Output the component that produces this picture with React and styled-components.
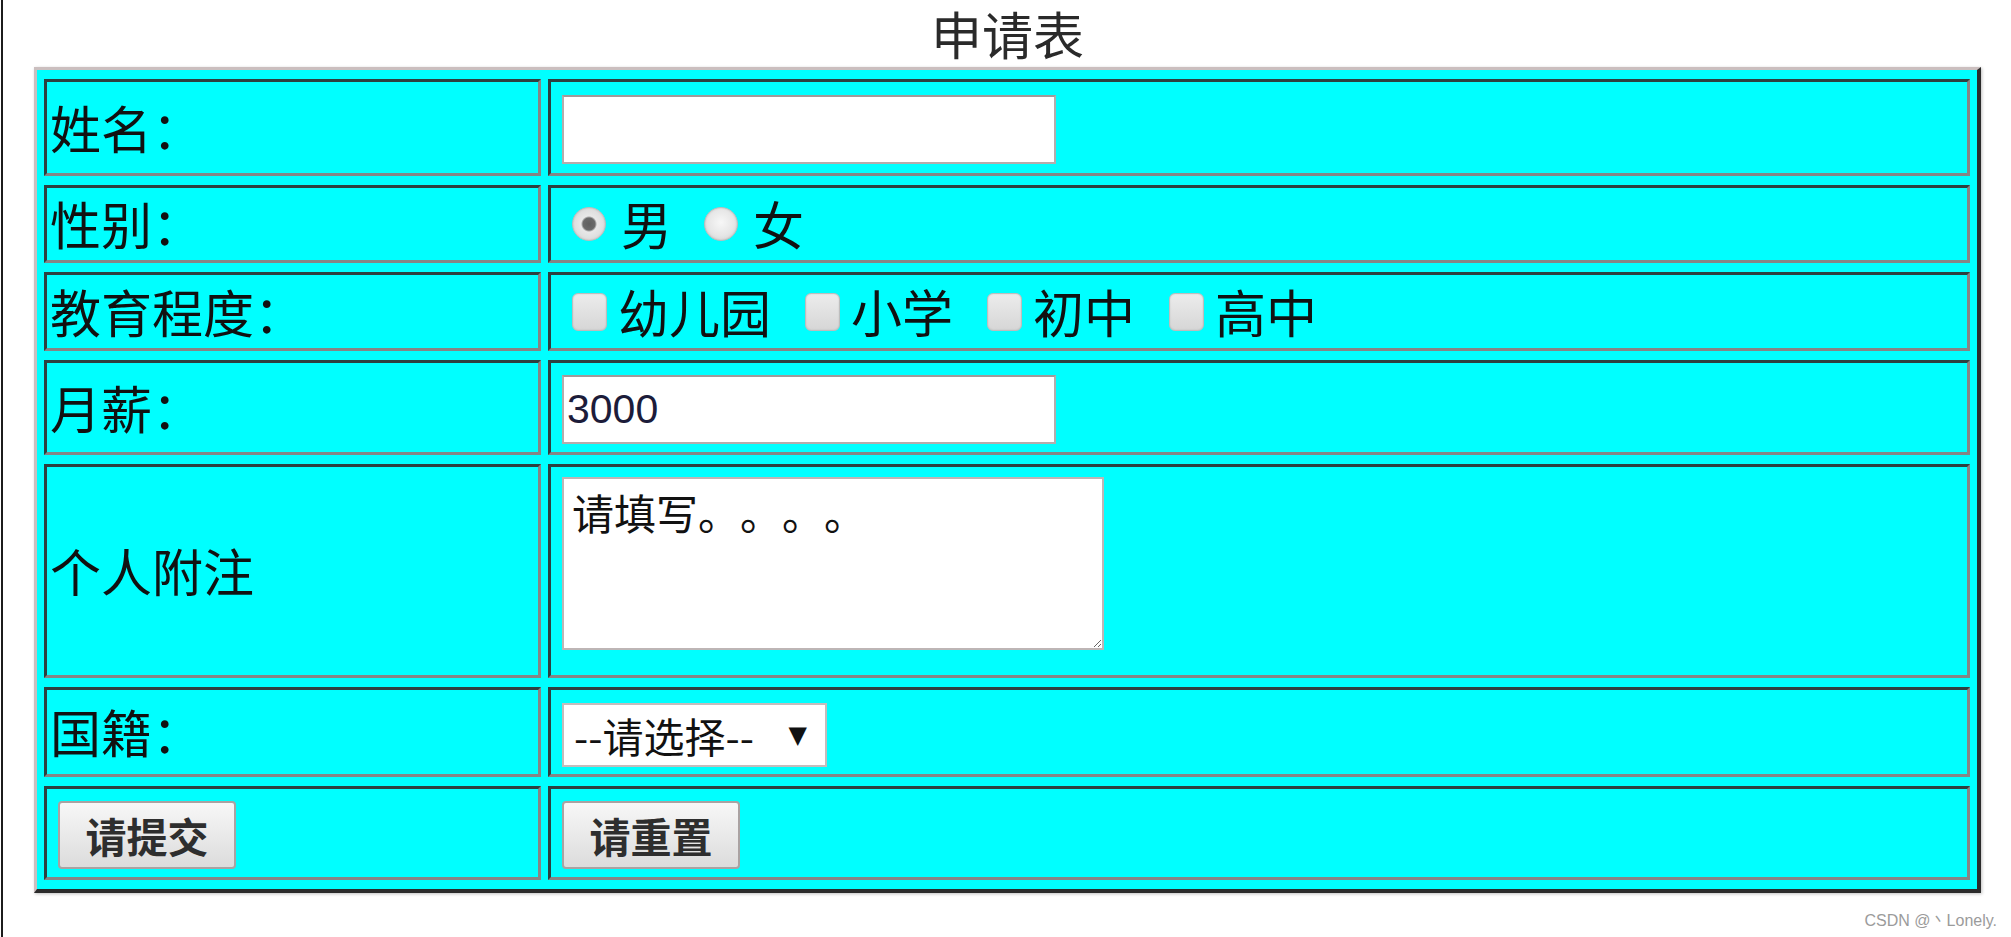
import React from 'react';
import styled, { createGlobalStyle } from 'styled-components';

const GlobalStyle = createGlobalStyle`
  html, body {
    margin: 0;
    padding: 0;
    background: #fff;
  }
  body {
    font-family: "Noto Sans CJK SC", "Liberation Sans", sans-serif;
    color: #111;
    text-spacing-trim: space-all;
  }
`;

const Page = styled.div`
  min-height: 937px;
  box-sizing: border-box;
  margin-left: 1px;
  border-left: 2px solid #1c1c1c;
  padding-left: 31px;
`;

const FormTable = styled.table`
  width: 1947px;
  box-sizing: border-box;
  border-collapse: separate;
  border-spacing: 7px 9px;
  background: #00ffff;
  border-style: solid;
  border-width: 3px 4px 4px 3px;
  border-color: #cbbfbf #2b2b2b #2b2b2b #cbbfbf;
  box-shadow: 1px 1px 3px rgba(0, 0, 0, 0.25);
`;

const Caption = styled.caption`
  line-height: 67px;
  font-size: 51px;
  color: #2a2a2a;
`;

const Row = styled.tr`
  height: ${(p) => p.$h}px;
`;

const Cell = styled.td`
  box-sizing: border-box;
  width: ${(p) => p.$w || 'auto'};
  padding: 3px;
  border-style: solid;
  border-width: 3px;
  border-color: #2d4040 #858585 #858585 #2d4040;
  font-size: 51px;
  line-height: 1.2;
  vertical-align: middle;
  white-space: nowrap;
`;

const TextInput = styled.input`
  box-sizing: border-box;
  width: 494px;
  height: 69px;
  margin: 0 0 0 8px;
  padding: 0 3px;
  border: 2px solid #b4acac;
  border-top-color: #a09a9a;
  background: #fff;
  font: 41px "Liberation Sans", Arial, sans-serif;
  color: #1c1c3a;
  vertical-align: middle;
  outline: none;
`;

const OptionGroup = styled.div`
  display: flex;
  align-items: center;
  gap: ${(p) => p.$gap}px;
  padding-left: 18px;
`;

const Option = styled.label`
  display: inline-flex;
  align-items: center;
  gap: ${(p) => p.$gap}px;
  font-size: 51px;
  cursor: pointer;
`;

const Radio = styled.input.attrs({ type: 'radio' })`
  appearance: none;
  margin: 0;
  width: 34px;
  height: 34px;
  border-radius: 50%;
  border: 1px solid #bdbdbd;
  background: radial-gradient(circle at 50% 45%, #f7f7f7 0%, #e6e6e6 55%, #cdcdcd 100%);
  box-shadow: inset 0 0 2px rgba(0, 0, 0, 0.15);

  &:checked {
    background: radial-gradient(circle at 50% 50%, #5e5e5e 0, #6a6a6a 6px, #e8e8e8 8px, #d2d2d2 100%);
  }
`;

const Checkbox = styled.input.attrs({ type: 'checkbox' })`
  appearance: none;
  margin: 0;
  width: 35px;
  height: 38px;
  border-radius: 6px;
  border: 1px solid #bdbdbd;
  background: linear-gradient(#ececec, #d6d6d6);
  box-shadow: inset 0 0 2px rgba(0, 0, 0, 0.12);
`;

const Notes = styled.textarea`
  display: block;
  box-sizing: border-box;
  width: 542px;
  height: 173px;
  margin: 7px 0 22px 8px;
  padding: 8px 8px;
  border: 2px solid #bdb5b5;
  background: #fff;
  font: 42px/1.2 "Noto Sans CJK SC", sans-serif;
  color: #111;
  outline: none;
  text-spacing-trim: space-all;
`;

const SelectBox = styled.span`
  display: inline-flex;
  align-items: center;
  box-sizing: border-box;
  width: 265px;
  height: 64px;
  margin-left: 8px;
  background: #fff;
  border: 2px solid #c4bcbc;
  vertical-align: middle;
`;

const Select = styled.select`
  appearance: none;
  flex: 1;
  height: 100%;
  min-width: 0;
  padding: 0 0 0 10px;
  border: none;
  background: transparent;
  font: 41px "Noto Sans CJK SC", sans-serif;
  color: #111;
  outline: none;
`;

const Caret = styled.span`
  margin-right: 18px;
  font: 24px "DejaVu Sans", sans-serif;
  color: #111;
`;

const Button = styled.button`
  box-sizing: border-box;
  width: 178px;
  height: 68px;
  margin-left: 8px;
  padding: 0;
  border: 2px solid #aaa2a2;
  border-radius: 4px;
  background: linear-gradient(#f7f7f7, #dcdcdc);
  font: 700 41px "Noto Sans CJK SC", sans-serif;
  color: #2e2e2e;
  vertical-align: middle;
`;

const Watermark = styled.div`
  margin-top: 18px;
  padding-right: 14px;
  text-align: right;
  font: 16px "Liberation Sans", Arial, sans-serif;
  color: #9b9b9b;
`;

const levels = ['幼儿园', '小学', '初中', '高中'];

export default function App() {
  return (
    <>
      <GlobalStyle />
      <Page>
        <FormTable>
          <Caption>申请表</Caption>
          <tbody>
            <Row $h={97}>
              <Cell $w="497px">姓名：</Cell>
              <Cell>
                <TextInput type="text" />
              </Cell>
            </Row>
            <Row $h={78}>
              <Cell $w="497px">性别：</Cell>
              <Cell>
                <OptionGroup $gap={32}>
                  <Option $gap={15}>
                    <Radio name="sex" defaultChecked />男
                  </Option>
                  <Option $gap={15}>
                    <Radio name="sex" />女
                  </Option>
                </OptionGroup>
              </Cell>
            </Row>
            <Row $h={79}>
              <Cell $w="497px">教育程度：</Cell>
              <Cell>
                <OptionGroup $gap={34}>
                  {levels.map((l) => (
                    <Option key={l} $gap={11}>
                      <Checkbox />
                      {l}
                    </Option>
                  ))}
                </OptionGroup>
              </Cell>
            </Row>
            <Row $h={95}>
              <Cell $w="497px">月薪：</Cell>
              <Cell>
                <TextInput type="text" defaultValue="3000" />
              </Cell>
            </Row>
            <Row $h={214}>
              <Cell $w="497px">个人附注</Cell>
              <Cell>
                <Notes defaultValue="请填写。。。。" />
              </Cell>
            </Row>
            <Row $h={90}>
              <Cell $w="497px">国籍：</Cell>
              <Cell>
                <SelectBox>
                  <Select defaultValue="">
                    <option value="">--请选择--</option>
                    <option value="cn">中国</option>
                    <option value="us">美国</option>
                    <option value="jp">日本</option>
                  </Select>
                  <Caret>▼</Caret>
                </SelectBox>
              </Cell>
            </Row>
            <Row $h={94}>
              <Cell $w="497px">
                <Button type="submit">请提交</Button>
              </Cell>
              <Cell>
                <Button type="reset">请重置</Button>
              </Cell>
            </Row>
          </tbody>
        </FormTable>
        <Watermark>CSDN @丶Lonely.</Watermark>
      </Page>
    </>
  );
}
